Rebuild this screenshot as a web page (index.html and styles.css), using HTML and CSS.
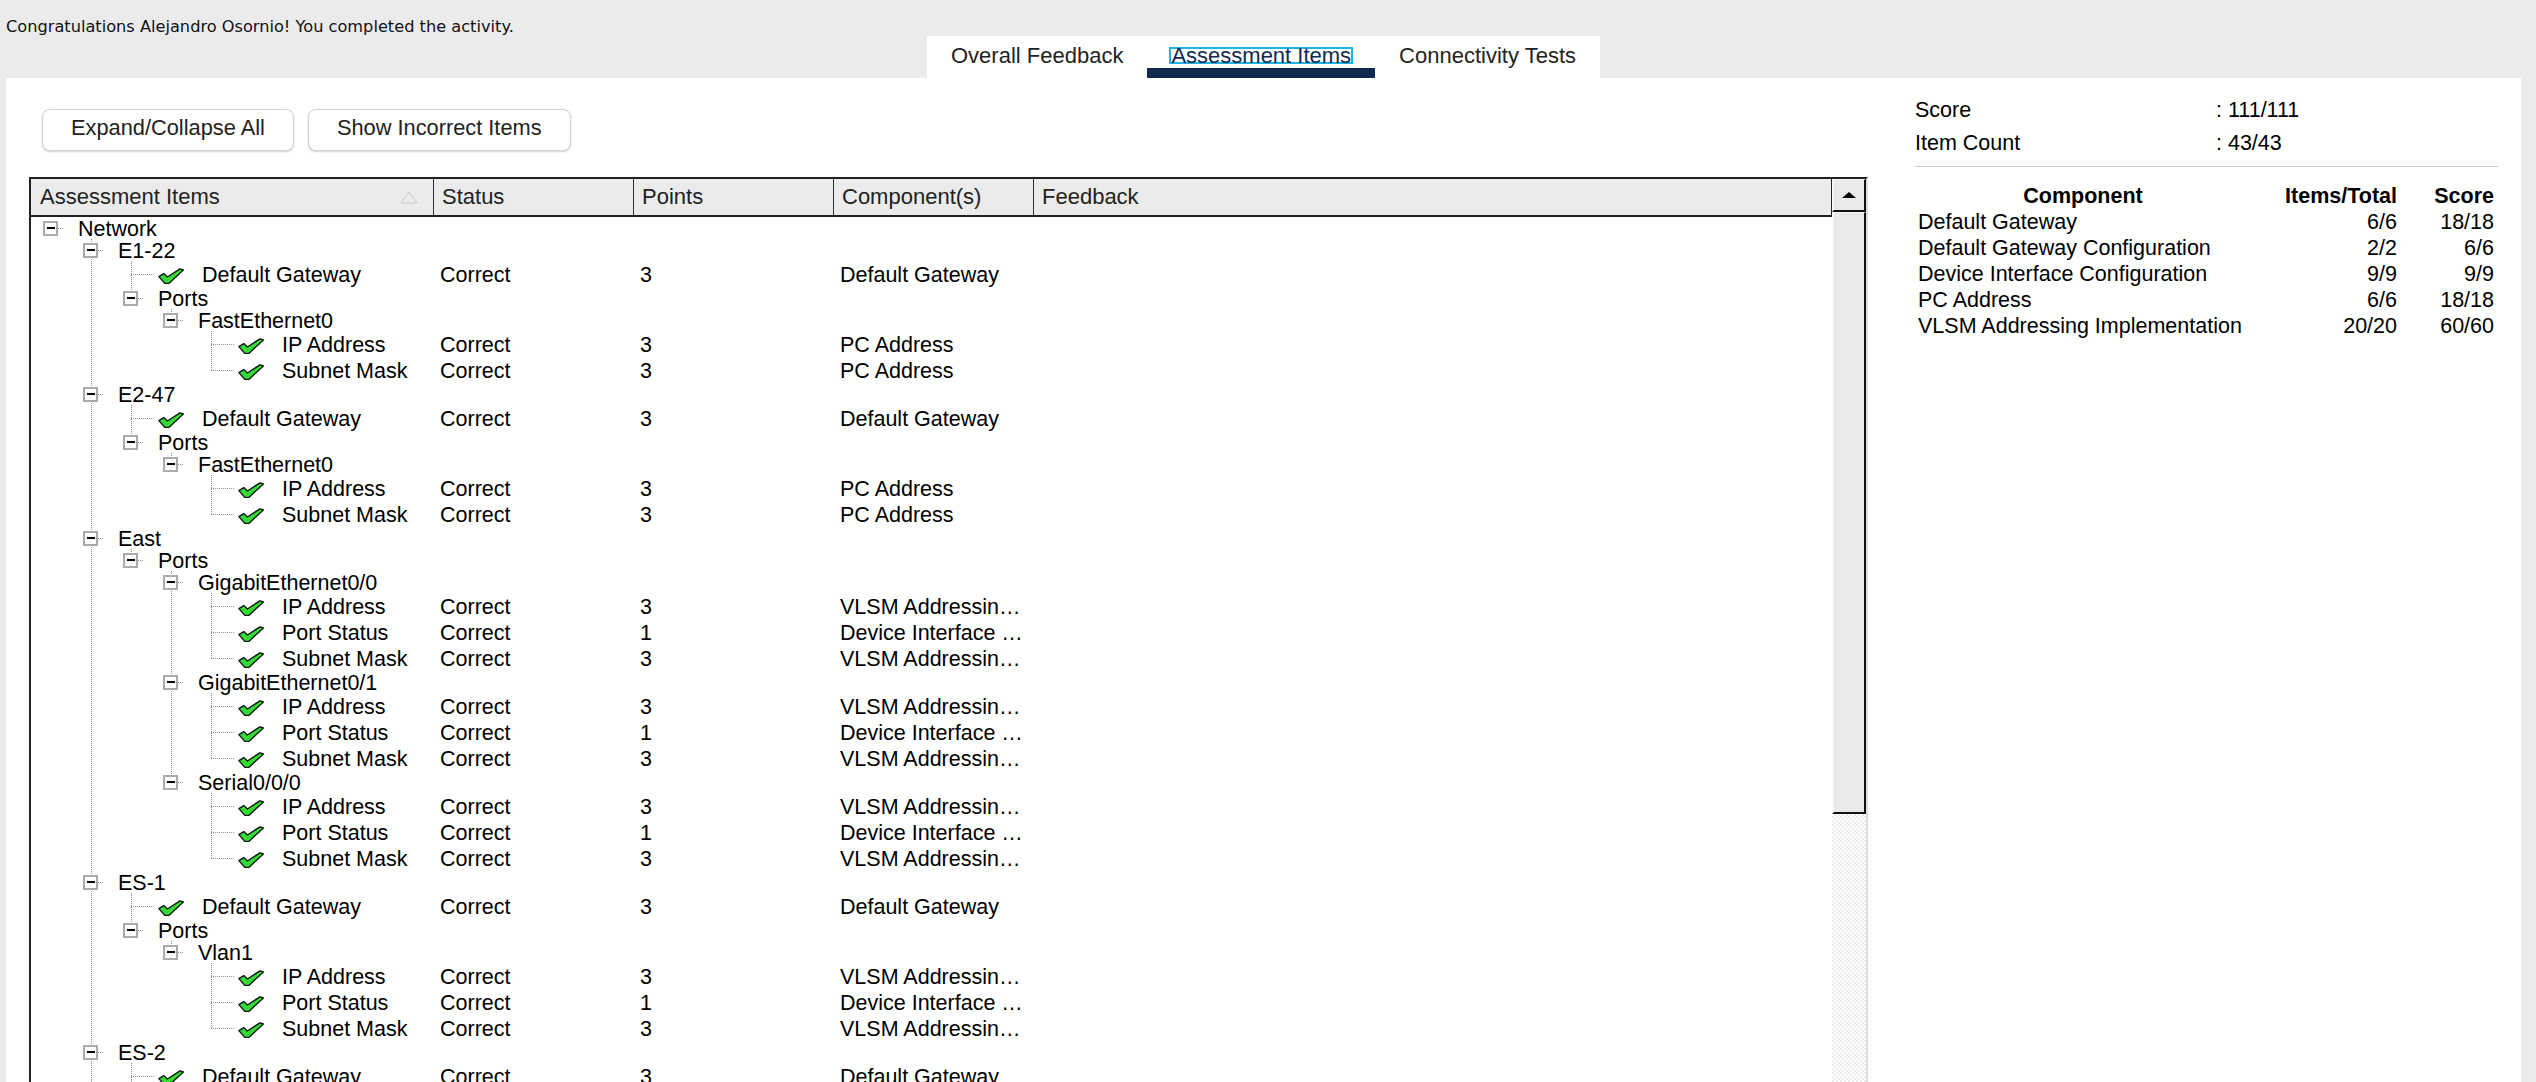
FILE: index.html
```html
<!DOCTYPE html>
<html>
<head>
<meta charset="utf-8">
<link rel="stylesheet" href="styles.css">
</head>
<body>
<svg class="defs" width="0" height="0">
  <symbol id="chk" viewBox="0 0 26 16">
    <path d="M0.9 8.6 L5.8 5.6 L9.4 9 L22 0.8 L25.4 1.9 L10.8 15.4 L6.8 15.4 Z" fill="#36dc36" stroke="#101610" stroke-width="1.4" stroke-linejoin="round"/>
  </symbol>
</svg>
<div class="congrats">Congratulations Alejandro Osornio! You completed the activity.</div>
<div class="tabbar">
  <div class="tabs">
    <div class="tab">Overall Feedback</div>
    <div class="tab active"><span class="focus">Assessment Items</span></div>
    <div class="tab">Connectivity Tests</div>
  </div>
</div>
<div class="panel">
  <div class="left">
    <div class="buttons">
      <div class="btn">Expand/Collapse All</div>
      <div class="btn">Show Incorrect Items</div>
    </div>
    <div class="grid">
      <div class="main">
        <div class="head">
          <div class="hc first">Assessment Items<svg class="sort" width="18" height="13" viewBox="0 0 18 13"><polygon points="9,1 17,12 1,12" fill="none" stroke="#c9c9c9" stroke-width="1"/></svg></div>
          <div class="hc">Status</div>
          <div class="hc">Points</div>
          <div class="hc">Component(s)</div>
          <div class="hc last">Feedback</div>
        </div>
        <div class="rows">
          <div class="row b"><div class="tree"><span class="h"><i class="box"></i><i class="c"></i></span><span class="lbl">Network</span></div></div>

          <div class="row b"><div class="tree"><i class="g"></i><span class="h tb"><i class="box"></i><i class="c"></i></span><span class="lbl">E1-22</span></div></div>
          <div class="row"><div class="tree"><i class="g"></i><i class="g v"></i><span class="h ltb"></span><svg class="ico"><use href="#chk"/></svg><span class="lbl">Default Gateway</span></div><span class="cell">Correct</span><span class="cell">3</span><span class="cell">Default Gateway</span></div>
          <div class="row b"><div class="tree"><i class="g"></i><i class="g v"></i><span class="h t"><i class="box"></i><i class="c"></i></span><span class="lbl">Ports</span></div></div>
          <div class="row b"><div class="tree"><i class="g"></i><i class="g v"></i><i class="g"></i><span class="h t"><i class="box"></i><i class="c"></i></span><span class="lbl">FastEthernet0</span></div></div>
          <div class="row"><div class="tree"><i class="g"></i><i class="g v"></i><i class="g"></i><i class="g"></i><span class="h ltb"></span><svg class="ico"><use href="#chk"/></svg><span class="lbl">IP Address</span></div><span class="cell">Correct</span><span class="cell">3</span><span class="cell">PC Address</span></div>
          <div class="row"><div class="tree"><i class="g"></i><i class="g v"></i><i class="g"></i><i class="g"></i><span class="h lt"></span><svg class="ico"><use href="#chk"/></svg><span class="lbl">Subnet Mask</span></div><span class="cell">Correct</span><span class="cell">3</span><span class="cell">PC Address</span></div>

          <div class="row b"><div class="tree"><i class="g"></i><span class="h tb"><i class="box"></i><i class="c"></i></span><span class="lbl">E2-47</span></div></div>
          <div class="row"><div class="tree"><i class="g"></i><i class="g v"></i><span class="h ltb"></span><svg class="ico"><use href="#chk"/></svg><span class="lbl">Default Gateway</span></div><span class="cell">Correct</span><span class="cell">3</span><span class="cell">Default Gateway</span></div>
          <div class="row b"><div class="tree"><i class="g"></i><i class="g v"></i><span class="h t"><i class="box"></i><i class="c"></i></span><span class="lbl">Ports</span></div></div>
          <div class="row b"><div class="tree"><i class="g"></i><i class="g v"></i><i class="g"></i><span class="h t"><i class="box"></i><i class="c"></i></span><span class="lbl">FastEthernet0</span></div></div>
          <div class="row"><div class="tree"><i class="g"></i><i class="g v"></i><i class="g"></i><i class="g"></i><span class="h ltb"></span><svg class="ico"><use href="#chk"/></svg><span class="lbl">IP Address</span></div><span class="cell">Correct</span><span class="cell">3</span><span class="cell">PC Address</span></div>
          <div class="row"><div class="tree"><i class="g"></i><i class="g v"></i><i class="g"></i><i class="g"></i><span class="h lt"></span><svg class="ico"><use href="#chk"/></svg><span class="lbl">Subnet Mask</span></div><span class="cell">Correct</span><span class="cell">3</span><span class="cell">PC Address</span></div>

          <div class="row b"><div class="tree"><i class="g"></i><span class="h tb"><i class="box"></i><i class="c"></i></span><span class="lbl">East</span></div></div>
          <div class="row b"><div class="tree"><i class="g"></i><i class="g v"></i><span class="h t"><i class="box"></i><i class="c"></i></span><span class="lbl">Ports</span></div></div>
          <div class="row b"><div class="tree"><i class="g"></i><i class="g v"></i><i class="g"></i><span class="h tb"><i class="box"></i><i class="c"></i></span><span class="lbl">GigabitEthernet0/0</span></div></div>
          <div class="row"><div class="tree"><i class="g"></i><i class="g v"></i><i class="g"></i><i class="g v"></i><span class="h ltb"></span><svg class="ico"><use href="#chk"/></svg><span class="lbl">IP Address</span></div><span class="cell">Correct</span><span class="cell">3</span><span class="cell">VLSM Addressin…</span></div>
          <div class="row"><div class="tree"><i class="g"></i><i class="g v"></i><i class="g"></i><i class="g v"></i><span class="h ltb"></span><svg class="ico"><use href="#chk"/></svg><span class="lbl">Port Status</span></div><span class="cell">Correct</span><span class="cell">1</span><span class="cell">Device Interface …</span></div>
          <div class="row"><div class="tree"><i class="g"></i><i class="g v"></i><i class="g"></i><i class="g v"></i><span class="h lt"></span><svg class="ico"><use href="#chk"/></svg><span class="lbl">Subnet Mask</span></div><span class="cell">Correct</span><span class="cell">3</span><span class="cell">VLSM Addressin…</span></div>
          <div class="row b"><div class="tree"><i class="g"></i><i class="g v"></i><i class="g"></i><span class="h tb"><i class="box"></i><i class="c"></i></span><span class="lbl">GigabitEthernet0/1</span></div></div>
          <div class="row"><div class="tree"><i class="g"></i><i class="g v"></i><i class="g"></i><i class="g v"></i><span class="h ltb"></span><svg class="ico"><use href="#chk"/></svg><span class="lbl">IP Address</span></div><span class="cell">Correct</span><span class="cell">3</span><span class="cell">VLSM Addressin…</span></div>
          <div class="row"><div class="tree"><i class="g"></i><i class="g v"></i><i class="g"></i><i class="g v"></i><span class="h ltb"></span><svg class="ico"><use href="#chk"/></svg><span class="lbl">Port Status</span></div><span class="cell">Correct</span><span class="cell">1</span><span class="cell">Device Interface …</span></div>
          <div class="row"><div class="tree"><i class="g"></i><i class="g v"></i><i class="g"></i><i class="g v"></i><span class="h lt"></span><svg class="ico"><use href="#chk"/></svg><span class="lbl">Subnet Mask</span></div><span class="cell">Correct</span><span class="cell">3</span><span class="cell">VLSM Addressin…</span></div>
          <div class="row b"><div class="tree"><i class="g"></i><i class="g v"></i><i class="g"></i><span class="h t"><i class="box"></i><i class="c"></i></span><span class="lbl">Serial0/0/0</span></div></div>
          <div class="row"><div class="tree"><i class="g"></i><i class="g v"></i><i class="g"></i><i class="g"></i><span class="h ltb"></span><svg class="ico"><use href="#chk"/></svg><span class="lbl">IP Address</span></div><span class="cell">Correct</span><span class="cell">3</span><span class="cell">VLSM Addressin…</span></div>
          <div class="row"><div class="tree"><i class="g"></i><i class="g v"></i><i class="g"></i><i class="g"></i><span class="h ltb"></span><svg class="ico"><use href="#chk"/></svg><span class="lbl">Port Status</span></div><span class="cell">Correct</span><span class="cell">1</span><span class="cell">Device Interface …</span></div>
          <div class="row"><div class="tree"><i class="g"></i><i class="g v"></i><i class="g"></i><i class="g"></i><span class="h lt"></span><svg class="ico"><use href="#chk"/></svg><span class="lbl">Subnet Mask</span></div><span class="cell">Correct</span><span class="cell">3</span><span class="cell">VLSM Addressin…</span></div>

          <div class="row b"><div class="tree"><i class="g"></i><span class="h tb"><i class="box"></i><i class="c"></i></span><span class="lbl">ES-1</span></div></div>
          <div class="row"><div class="tree"><i class="g"></i><i class="g v"></i><span class="h ltb"></span><svg class="ico"><use href="#chk"/></svg><span class="lbl">Default Gateway</span></div><span class="cell">Correct</span><span class="cell">3</span><span class="cell">Default Gateway</span></div>
          <div class="row b"><div class="tree"><i class="g"></i><i class="g v"></i><span class="h t"><i class="box"></i><i class="c"></i></span><span class="lbl">Ports</span></div></div>
          <div class="row b"><div class="tree"><i class="g"></i><i class="g v"></i><i class="g"></i><span class="h t"><i class="box"></i><i class="c"></i></span><span class="lbl">Vlan1</span></div></div>
          <div class="row"><div class="tree"><i class="g"></i><i class="g v"></i><i class="g"></i><i class="g"></i><span class="h ltb"></span><svg class="ico"><use href="#chk"/></svg><span class="lbl">IP Address</span></div><span class="cell">Correct</span><span class="cell">3</span><span class="cell">VLSM Addressin…</span></div>
          <div class="row"><div class="tree"><i class="g"></i><i class="g v"></i><i class="g"></i><i class="g"></i><span class="h ltb"></span><svg class="ico"><use href="#chk"/></svg><span class="lbl">Port Status</span></div><span class="cell">Correct</span><span class="cell">1</span><span class="cell">Device Interface …</span></div>
          <div class="row"><div class="tree"><i class="g"></i><i class="g v"></i><i class="g"></i><i class="g"></i><span class="h lt"></span><svg class="ico"><use href="#chk"/></svg><span class="lbl">Subnet Mask</span></div><span class="cell">Correct</span><span class="cell">3</span><span class="cell">VLSM Addressin…</span></div>

          <div class="row b"><div class="tree"><i class="g"></i><span class="h tb"><i class="box"></i><i class="c"></i></span><span class="lbl">ES-2</span></div></div>
          <div class="row"><div class="tree"><i class="g"></i><i class="g v"></i><span class="h ltb"></span><svg class="ico"><use href="#chk"/></svg><span class="lbl">Default Gateway</span></div><span class="cell">Correct</span><span class="cell">3</span><span class="cell">Default Gateway</span></div>
        </div>
      </div>
      <div class="vs">
        <div class="up"><i class="tri"></i></div>
        <div class="thumb"></div>
        <div class="track"></div>
      </div>
    </div>
  </div>
  <div class="right">
    <div class="kv">
      <span>Score</span><span>: 111/111</span>
      <span>Item Count</span><span>: 43/43</span>
    </div>
    <div class="divider"></div>
    <div class="comp">
      <span class="ch center">Component</span><span class="ch num">Items/Total</span><span class="ch num">Score</span>
      <span>Default Gateway</span><span class="num">6/6</span><span class="num">18/18</span>
      <span>Default Gateway Configuration</span><span class="num">2/2</span><span class="num">6/6</span>
      <span>Device Interface Configuration</span><span class="num">9/9</span><span class="num">9/9</span>
      <span>PC Address</span><span class="num">6/6</span><span class="num">18/18</span>
      <span>VLSM Addressing Implementation</span><span class="num">20/20</span><span class="num">60/60</span>
    </div>
  </div>
</div>
</body>
</html>
```

FILE: styles.css
```css
* { box-sizing: border-box; }
html, body { margin: 0; padding: 0; height: 100%; overflow: hidden; }
body {
  background: #ebebeb;
  font-family: "Liberation Sans", Arial, Helvetica, sans-serif;
  color: #000;
}
.defs { position: absolute; width: 0; height: 0; }

.congrats {
  height: 36px;
  padding: 18px 0 0 6px;
  font-family: "DejaVu Sans", "Liberation Sans", sans-serif;
  font-size: 16.2px;
  line-height: 18px;
  color: #111;
  white-space: nowrap;
}

.tabbar {
  display: flex;
  justify-content: center;
  padding: 0 15px 0 6px;
}
.tabs {
  display: flex;
  background: #fff;
  height: 42px;
}
.tab {
  padding: 0 24px;
  font-size: 22px;
  line-height: 40px;
  color: #222;
  white-space: nowrap;
}
.tab.active {
  padding: 0 22px;
  color: #0f2a4e;
  box-shadow: inset 0 -10px 0 #0f2a4e;
}
.focus {
  display: inline-block;
  height: 17px;
  line-height: 17px;
  padding: 0 2px;
  box-shadow: inset 0 0 0 2px #1db4e8;
}

.panel {
  display: flex;
  margin: 0 15px 0 6px;
  background: #fff;
  height: 1100px;
}
.left {
  width: 1862px;
  flex: none;
  padding: 31px 0 0 23px;
}
.buttons {
  display: flex;
  gap: 14px;
  padding-left: 13px;
}
.btn {
  height: 42px;
  padding: 0 28px 5px;
  border: 1px solid #d2d2d2;
  border-radius: 8px;
  background: #fff;
  box-shadow: 0 1px 2px rgba(0, 0, 0, 0.18);
  font-size: 21.8px;
  line-height: 35px;
  color: #222;
  white-space: nowrap;
}

.grid {
  display: flex;
  margin-top: 26px;
  height: 960px;
  border-top: 2px solid #222;
  border-left: 2px solid #222;
  border-right: 2px solid #dedede;
}
.main { flex: 1; min-width: 0; }
.head {
  display: flex;
  height: 38px;
  background: #ebebeb;
  border-bottom: 2px solid #222;
  border-right: 1px solid #222;
  font-size: 22px;
  line-height: 36px;
  color: #222;
}
.hc {
  width: 200px;
  flex: none;
  padding-left: 8px;
  border-left: 1px solid #333;
  white-space: nowrap;
}
.hc.first {
  width: 402px;
  padding-left: 9px;
  border-left: 0;
  display: flex;
  align-items: center;
}
.hc.last { flex: 1; }
.sort { margin-left: auto; margin-right: 15px; }

.rows { font-size: 21.5px; }
.row {
  display: flex;
  height: 26px;
}
.row.b { height: 22px; }
.tree {
  width: 402px;
  flex: none;
  display: flex;
  align-items: stretch;
}
.g { display: block; width: 40px; flex: none; }
.g.v {
  background: repeating-linear-gradient(to bottom, #8f8f8f 0 1px, transparent 1px 2px) 20px 0 / 1px 100% no-repeat;
}
.h {
  display: flex;
  align-items: center;
  width: 47px;
  flex: none;
  padding-left: 13px;
}
.h.t {
  background: repeating-linear-gradient(to bottom, #8f8f8f 0 1px, transparent 1px 2px) 20px 0 / 1px 50% no-repeat;
}
.h.tb {
  background: repeating-linear-gradient(to bottom, #8f8f8f 0 1px, transparent 1px 2px) 20px 0 / 1px 100% no-repeat;
}
.h.lt {
  background:
    repeating-linear-gradient(to bottom, #8f8f8f 0 1px, transparent 1px 2px) 20px 0 / 1px 50% no-repeat,
    repeating-linear-gradient(to right, #8f8f8f 0 1px, transparent 1px 2px) 20px 50% / 24px 1px no-repeat;
}
.h.ltb {
  background:
    repeating-linear-gradient(to bottom, #8f8f8f 0 1px, transparent 1px 2px) 20px 0 / 1px 100% no-repeat,
    repeating-linear-gradient(to right, #8f8f8f 0 1px, transparent 1px 2px) 20px 50% / 24px 1px no-repeat;
}
.box {
  display: flex;
  align-items: center;
  justify-content: center;
  width: 15px;
  height: 15px;
  flex: none;
  margin-left: -1px;
  border: 2px solid #ababab;
  background: #fff;
}
.box::before {
  content: "";
  width: 8px;
  height: 2px;
  background: #000;
}
.c {
  display: block;
  width: 6px;
  height: 1px;
  flex: none;
  background: repeating-linear-gradient(to right, #8f8f8f 0 1px, transparent 1px 2px);
}
.ico {
  width: 26px;
  height: 16px;
  flex: none;
  align-self: center;
  margin: 3px 18px 0 0;
}
.lbl {
  display: block;
  white-space: nowrap;
  line-height: 22px;
  padding-top: 1px;
}
.row:not(.b) .lbl { line-height: 26px; }
.cell {
  display: block;
  width: 200px;
  flex: none;
  padding: 1px 0 0 7px;
  line-height: 26px;
  white-space: nowrap;
  overflow: hidden;
}

.vs {
  width: 34px;
  flex: none;
  display: flex;
  flex-direction: column;
}
.up {
  height: 33px;
  flex: none;
  display: flex;
  align-items: center;
  justify-content: center;
  background: #e9e9e9;
  border-left: 2px solid #f7f7f7;
  border-top: 1px solid #f7f7f7;
  border-right: 2px solid #111;
  border-bottom: 2px solid #111;
}
.tri {
  display: block;
  width: 0;
  height: 0;
  border-left: 7px solid transparent;
  border-right: 7px solid transparent;
  border-bottom: 6px solid #000;
}
.thumb {
  height: 602px;
  flex: none;
  background: #e9e9e9;
  border-left: 2px solid #f7f7f7;
  border-top: 1px solid #f7f7f7;
  border-right: 2px solid #111;
  border-bottom: 2px solid #111;
}
.track {
  flex: 1;
  background: repeating-conic-gradient(#ececec 0 25%, #ffffff 0 50%) 0 0 / 4px 4px;
}

.right {
  flex: 1;
  padding: 16px 23px 0 47px;
  font-size: 21.5px;
  color: #000;
}
.kv {
  display: grid;
  grid-template-columns: 301px auto;
  line-height: 33px;
}
.divider {
  height: 1px;
  background: #cccccc;
  margin-top: 6px;
}
.comp {
  display: grid;
  grid-template-columns: 330px 149px 97px;
  margin: 16px 0 0 3px;
  line-height: 26px;
  white-space: nowrap;
}
.ch { font-weight: bold; }
.center { text-align: center; }
.num { text-align: right; }
```
